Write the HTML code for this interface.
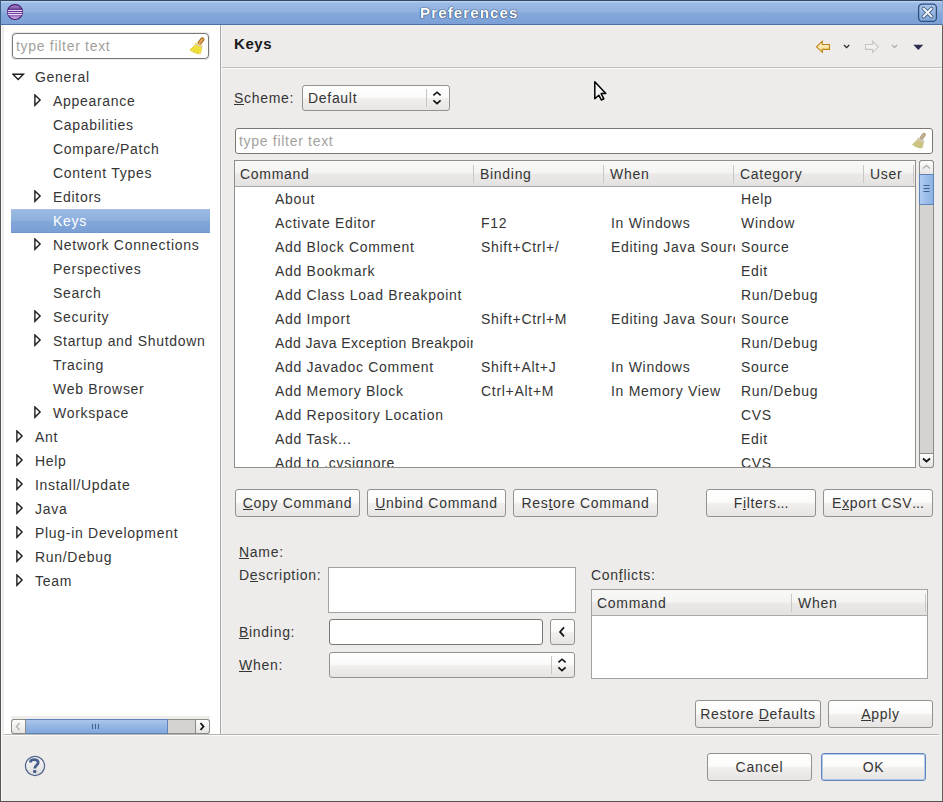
<!DOCTYPE html>
<html><head><meta charset="utf-8"><style>
*{margin:0;padding:0;box-sizing:border-box}
html,body{width:943px;height:802px;overflow:hidden;background:#edeceb}
body{position:relative;font-family:"Liberation Sans",sans-serif;font-size:14px;color:#353535;letter-spacing:0.7px}
.a{position:absolute}
.t{position:absolute;white-space:nowrap;line-height:16px;height:16px}
.u{position:relative}
.u:after{content:"";position:absolute;left:0;right:0.5px;top:14px;height:1px;background:#353535}
.btn{position:absolute;border:1px solid #94928d;border-radius:3px;background:linear-gradient(#fefefe,#fbfbfa 47%,#f0efed 53%,#e6e5e3);text-align:center;line-height:27px;white-space:nowrap}
.hdr{position:absolute;background:linear-gradient(#f8f8f7,#f4f4f3 47%,#eae9e7 53%,#e3e2e0);border-bottom:1px solid #a9a8a4}
.sep{position:absolute;width:1px;background:#cbc9c5}
.clip{position:absolute;overflow:hidden;white-space:nowrap}
</style></head><body>
<div class="a" style="left:0;top:0;width:943px;height:25px;background:linear-gradient(#b6ceef,#b6ceef 1px,#9cbae4 2px,#90b1df 48%,#85a8da 52%,#7ba0d6);border-top:1px solid #34495f;border-bottom:1px solid #4a70a6;border-left:1px solid #3f5d85;border-right:1px solid #8aabdb"></div>
<svg class="a" style="left:6px;top:3px" width="18" height="18" viewBox="0 0 18 18">
<defs><linearGradient id="eg" x1="0" y1="0" x2="0" y2="1"><stop offset="0" stop-color="#7e56aa"/><stop offset="0.15" stop-color="#9a78c0"/><stop offset="0.42" stop-color="#4a1c7c"/><stop offset="0.7" stop-color="#8e62b8"/><stop offset="1" stop-color="#dcc6ee"/></linearGradient></defs>
<circle cx="9" cy="9" r="7.5" fill="url(#eg)" stroke="#46166c" stroke-width="1.1"/>
<rect x="1.8" y="7" width="14.4" height="1.2" fill="#eadcf4"/><rect x="1.6" y="9" width="14.8" height="1.1" fill="#e4d4f0"/><rect x="1.9" y="10.9" width="14.2" height="1.1" fill="#eadcf4"/>
<rect x="1.8" y="8.2" width="14.4" height="0.8" fill="#5a2a8c"/><rect x="1.8" y="10.1" width="14.4" height="0.8" fill="#6a38a0"/>
</svg>
<div class="t" style="left:420px;top:5px;color:#fff;font-weight:bold;font-size:15px;letter-spacing:1.15px;text-shadow:0 0 1px #24446f,0 0 1px #24446f,0 0 1px #24446f">Preferences</div>
<svg class="a" style="left:917px;top:3px" width="22" height="20" viewBox="0 0 22 20">
<defs><linearGradient id="xg" x1="0" y1="0" x2="0" y2="1"><stop offset="0" stop-color="#adc8ec"/><stop offset="1" stop-color="#7ea3d7"/></linearGradient></defs>
<rect x="1.6" y="1.2" width="17.8" height="17.2" rx="3.5" fill="url(#xg)" stroke="#2f4f7e" stroke-width="1.3"/>
<path d="M6.5 5.5 L14.5 13.5 M14.5 5.5 L6.5 13.5" stroke="#34557f" stroke-width="3.8" stroke-linecap="round"/>
<path d="M6.5 5.5 L14.5 13.5 M14.5 5.5 L6.5 13.5" stroke="#f4f6fa" stroke-width="2.1" stroke-linecap="round"/>
</svg>
<div class="a" style="left:1px;top:25px;width:219px;height:709px;background:#fff"></div>
<div class="a" style="left:2px;top:25px;width:2px;height:709px;background:#eeedec"></div>
<div class="a" style="left:1px;top:25px;width:1px;height:776px;background:#fbfbfb"></div>
<div class="a" style="left:220px;top:25px;width:1px;height:710px;background:#a9a7a3"></div>
<div class="a" style="left:221px;top:25px;width:1px;height:709px;background:#f7f7f6"></div>
<div class="a" style="left:4px;top:734px;width:935px;height:1px;background:#b6b4b0"></div>
<div class="a" style="left:4px;top:735px;width:935px;height:1px;background:#fbfbfa"></div>
<div class="a" style="left:0;top:25px;width:1px;height:777px;background:#56544f"></div>
<div class="a" style="left:942px;top:25px;width:1px;height:777px;background:#615f5a"></div>
<div class="a" style="left:0;top:801px;width:943px;height:1px;background:#56544f"></div>
<div class="a" style="left:11px;top:32px;width:199px;height:28px;border-radius:4px;background:#eceae8"></div>
<div class="a" style="left:12px;top:33px;width:197px;height:26px;border:1px solid #7b7873;border-radius:4px;background:#fff"></div>
<div class="t" style="left:16px;top:38px;color:#a3a19d">type filter text</div>
<svg class="a" style="left:184px;top:32px" width="26" height="26" viewBox="0 0 26 26">
<path d="M15.6 11 L18.4 7.4" stroke="#a8681a" stroke-width="4.2" stroke-linecap="round"/>
<path d="M15.6 11 L18.4 7.4" stroke="#dca25a" stroke-width="2.4" stroke-linecap="round"/>
<path d="M11.6 10.2 L12.6 11.2 L18.2 13.6 L19 14.6 L17.8 15.6 L11 12.8 Z" fill="#f3e43e"/>
<path d="M11.4 12.3 L18.2 14.8" stroke="#dccfe6" stroke-width="1.4"/>
<path d="M10.9 13 L17.9 15.6 C17.5 17.6 17.1 19.8 16.5 21.6 C14 22 10.2 21.2 5.8 17.8 C7.6 16.2 9.4 14.6 10.9 13 Z" fill="#f3e43e" stroke="#d2b818" stroke-width="0.5"/>
<path d="M10 15 L6.8 18.4 M12.6 15.6 L9.6 20.6 M15 16.6 L13.2 21.4" stroke="#d2b818" stroke-width="0.7" opacity="0.7"/>
</svg>
<div class="a" style="left:11px;top:209px;width:199px;height:24px;background:linear-gradient(#9bb9e2,#8eb0de 47%,#82a6d8 53%,#7aa0d5);border-top:1px solid #a3bfe6;border-bottom:1px solid #6f96cd"></div>
<svg class="a" style="left:12px;top:73px" width="14" height="8" viewBox="0 0 14 8"><path d="M0.9 1.2 L11.4 1.2 L6.15 6.5 Z" fill="none" stroke="#1c1c1c" stroke-width="1.4"/></svg>
<div class="t" style="left:35px;top:69px;">General</div>
<svg class="a" style="left:34px;top:94px" width="8" height="13" viewBox="0 0 8 13"><path d="M0.9 0.9 L6.1 6 L0.9 11.3 Z" fill="none" stroke="#1c1c1c" stroke-width="1.4" stroke-linejoin="miter"/></svg>
<div class="t" style="left:53px;top:93px;">Appearance</div>
<div class="t" style="left:53px;top:117px;">Capabilities</div>
<div class="t" style="left:53px;top:141px;">Compare/Patch</div>
<div class="t" style="left:53px;top:165px;">Content Types</div>
<svg class="a" style="left:34px;top:190px" width="8" height="13" viewBox="0 0 8 13"><path d="M0.9 0.9 L6.1 6 L0.9 11.3 Z" fill="none" stroke="#1c1c1c" stroke-width="1.4" stroke-linejoin="miter"/></svg>
<div class="t" style="left:53px;top:189px;">Editors</div>
<div class="t" style="left:53px;top:213px;color:#fff">Keys</div>
<svg class="a" style="left:34px;top:238px" width="8" height="13" viewBox="0 0 8 13"><path d="M0.9 0.9 L6.1 6 L0.9 11.3 Z" fill="none" stroke="#1c1c1c" stroke-width="1.4" stroke-linejoin="miter"/></svg>
<div class="t" style="left:53px;top:237px;">Network Connections</div>
<div class="t" style="left:53px;top:261px;">Perspectives</div>
<div class="t" style="left:53px;top:285px;">Search</div>
<svg class="a" style="left:34px;top:310px" width="8" height="13" viewBox="0 0 8 13"><path d="M0.9 0.9 L6.1 6 L0.9 11.3 Z" fill="none" stroke="#1c1c1c" stroke-width="1.4" stroke-linejoin="miter"/></svg>
<div class="t" style="left:53px;top:309px;">Security</div>
<svg class="a" style="left:34px;top:334px" width="8" height="13" viewBox="0 0 8 13"><path d="M0.9 0.9 L6.1 6 L0.9 11.3 Z" fill="none" stroke="#1c1c1c" stroke-width="1.4" stroke-linejoin="miter"/></svg>
<div class="t" style="left:53px;top:333px;">Startup and Shutdown</div>
<div class="t" style="left:53px;top:357px;">Tracing</div>
<div class="t" style="left:53px;top:381px;">Web Browser</div>
<svg class="a" style="left:34px;top:406px" width="8" height="13" viewBox="0 0 8 13"><path d="M0.9 0.9 L6.1 6 L0.9 11.3 Z" fill="none" stroke="#1c1c1c" stroke-width="1.4" stroke-linejoin="miter"/></svg>
<div class="t" style="left:53px;top:405px;">Workspace</div>
<svg class="a" style="left:16px;top:430px" width="8" height="13" viewBox="0 0 8 13"><path d="M0.9 0.9 L6.1 6 L0.9 11.3 Z" fill="none" stroke="#1c1c1c" stroke-width="1.4" stroke-linejoin="miter"/></svg>
<div class="t" style="left:35px;top:429px;">Ant</div>
<svg class="a" style="left:16px;top:454px" width="8" height="13" viewBox="0 0 8 13"><path d="M0.9 0.9 L6.1 6 L0.9 11.3 Z" fill="none" stroke="#1c1c1c" stroke-width="1.4" stroke-linejoin="miter"/></svg>
<div class="t" style="left:35px;top:453px;">Help</div>
<svg class="a" style="left:16px;top:478px" width="8" height="13" viewBox="0 0 8 13"><path d="M0.9 0.9 L6.1 6 L0.9 11.3 Z" fill="none" stroke="#1c1c1c" stroke-width="1.4" stroke-linejoin="miter"/></svg>
<div class="t" style="left:35px;top:477px;">Install/Update</div>
<svg class="a" style="left:16px;top:502px" width="8" height="13" viewBox="0 0 8 13"><path d="M0.9 0.9 L6.1 6 L0.9 11.3 Z" fill="none" stroke="#1c1c1c" stroke-width="1.4" stroke-linejoin="miter"/></svg>
<div class="t" style="left:35px;top:501px;">Java</div>
<svg class="a" style="left:16px;top:526px" width="8" height="13" viewBox="0 0 8 13"><path d="M0.9 0.9 L6.1 6 L0.9 11.3 Z" fill="none" stroke="#1c1c1c" stroke-width="1.4" stroke-linejoin="miter"/></svg>
<div class="t" style="left:35px;top:525px;">Plug-in Development</div>
<svg class="a" style="left:16px;top:550px" width="8" height="13" viewBox="0 0 8 13"><path d="M0.9 0.9 L6.1 6 L0.9 11.3 Z" fill="none" stroke="#1c1c1c" stroke-width="1.4" stroke-linejoin="miter"/></svg>
<div class="t" style="left:35px;top:549px;">Run/Debug</div>
<svg class="a" style="left:16px;top:574px" width="8" height="13" viewBox="0 0 8 13"><path d="M0.9 0.9 L6.1 6 L0.9 11.3 Z" fill="none" stroke="#1c1c1c" stroke-width="1.4" stroke-linejoin="miter"/></svg>
<div class="t" style="left:35px;top:573px;">Team</div>
<div class="a" style="left:11px;top:716px;width:199px;height:18px;background:#eeedec"></div>
<div class="a" style="left:11px;top:719px;width:199px;height:15px;background:#d4d3d0;border:1px solid #8c8a85;border-radius:3px"></div>
<div class="a" style="left:25px;top:719px;width:143px;height:15px;background:linear-gradient(#aac6ec,#93b5e3 50%,#82a8da);border:1px solid #5e84b9"></div>
<svg class="a" style="left:91px;top:722px" width="10" height="9"><path d="M1.5 1.8V7M4.5 1.8V7M7.5 1.8V7" stroke="#3f5f8c" stroke-width="1"/></svg>
<div class="a" style="left:11px;top:719px;width:15px;height:15px;background:linear-gradient(#fdfdfd,#e6e5e3);border:1px solid #8c8a85;border-radius:3px 0 0 3px"></div>
<svg class="a" style="left:14px;top:722px" width="8" height="9"><path d="M5.5 1 L2.5 4.5 L5.5 8" fill="none" stroke="#b4b2ae" stroke-width="1.4"/></svg>
<div class="a" style="left:195px;top:719px;width:15px;height:15px;background:linear-gradient(#fdfdfd,#e6e5e3);border:1px solid #8c8a85;border-radius:0 3px 3px 0"></div>
<svg class="a" style="left:198px;top:722px" width="8" height="9"><path d="M2.5 1 L5.5 4.5 L2.5 8" fill="none" stroke="#111" stroke-width="1.8"/></svg>
<div class="t" style="left:234px;top:36px;font-weight:bold;font-size:15px;letter-spacing:0.6px;color:#1a1a1a">Keys</div>
<div class="a" style="left:222px;top:67px;width:720px;height:1px;background:#c1bfbb"></div>
<div class="a" style="left:222px;top:68px;width:720px;height:1px;background:#fbfbfa"></div>
<svg class="a" style="left:815px;top:40px" width="16" height="14" viewBox="0 0 16 14">
<defs><linearGradient id="ag" x1="0" y1="0" x2="0" y2="1"><stop offset="0" stop-color="#fff8e0"/><stop offset="1" stop-color="#f6d57a"/></linearGradient></defs><path d="M1.4 6.8 L7.3 1.3 L7.3 4.5 L14.5 4.5 L14.5 9.4 L7.3 9.4 L7.3 12.3 Z" fill="url(#ag)" stroke="#c0821a" stroke-width="1.1" stroke-linejoin="miter"/>
</svg>
<svg class="a" style="left:843px;top:44px" width="8" height="5"><path d="M1 1 L3.6 3.6 L6.2 1" fill="none" stroke="#2a2a2a" stroke-width="1.3"/></svg>
<svg class="a" style="left:864px;top:40px" width="16" height="14" viewBox="0 0 16 14">
<path d="M14.5 6.8 L8.6 1.3 L8.6 4.5 L1.5 4.5 L1.5 9.4 L8.6 9.4 L8.6 12.3 Z" fill="#f1f1f0" stroke="#c6c5c2" stroke-width="1.1" stroke-linejoin="miter"/>
</svg>
<svg class="a" style="left:891px;top:44px" width="7" height="5"><path d="M1 1 L3.5 3.6 L6 1" fill="none" stroke="#b0aeaa" stroke-width="1.3"/></svg>
<svg class="a" style="left:913px;top:44px" width="11" height="7"><path d="M0.3 0.8 L10.3 0.8 L5.3 6 Z" fill="#2c2c4e"/></svg>
<div class="t" style="left:234px;top:90px;"><span class="u">S</span>cheme:</div>
<div class="btn" style="left:302px;top:85px;width:148px;height:26px;text-align:left"></div>
<div class="t" style="left:308px;top:90px;">Default</div>
<div class="a" style="left:426px;top:89px;width:1px;height:18px;background:#c8c6c2"></div>
<svg class="a" style="left:432px;top:89px" width="10" height="18"><path d="M1.4 6.4 L5 3.2 L8.6 6.4 M1.4 11.4 L5 14.6 L8.6 11.4" fill="none" stroke="#111" stroke-width="1.6"/></svg>
<div class="a" style="left:235px;top:128px;width:698px;height:26px;border:1px solid #7b7873;border-radius:3px;background:#fff"></div>
<div class="t" style="left:239px;top:133px;color:#a3a19d">type filter text</div>
<div class="a" style="left:0;top:0;opacity:0.6"><svg class="a" style="left:907px;top:128px" width="24" height="24" viewBox="0 0 26 26">
<path d="M15.6 11 L18.4 7.4" stroke="#7a5a28" stroke-width="4.2" stroke-linecap="round"/>
<path d="M15.6 11 L18.4 7.4" stroke="#a08048" stroke-width="2.4" stroke-linecap="round"/>
<path d="M11.6 10.2 L12.6 11.2 L18.2 13.6 L19 14.6 L17.8 15.6 L11 12.8 Z" fill="#b0a030"/>
<path d="M11.4 12.3 L18.2 14.8" stroke="#b8a8c8" stroke-width="1.4"/>
<path d="M10.9 13 L17.9 15.6 C17.5 17.6 17.1 19.8 16.5 21.6 C14 22 10.2 21.2 5.8 17.8 C7.6 16.2 9.4 14.6 10.9 13 Z" fill="#b0a030" stroke="#988a20" stroke-width="0.5"/>
<path d="M10 15 L6.8 18.4 M12.6 15.6 L9.6 20.6 M15 16.6 L13.2 21.4" stroke="#988a20" stroke-width="0.7" opacity="0.7"/>
</svg></div>
<div class="a" style="left:234px;top:160px;width:682px;height:308px;border:1px solid #908e89;background:#fff"></div>
<div class="hdr" style="left:235px;top:161px;width:680px;height:26px"></div>
<div class="sep" style="left:473px;top:165px;height:18px"></div>
<div class="sep" style="left:603px;top:165px;height:18px"></div>
<div class="sep" style="left:733px;top:165px;height:18px"></div>
<div class="sep" style="left:863px;top:165px;height:18px"></div>
<div class="sep" style="left:913px;top:165px;height:18px"></div>
<div class="t" style="left:240px;top:166px;">Command</div>
<div class="t" style="left:480px;top:166px;">Binding</div>
<div class="t" style="left:610px;top:166px;">When</div>
<div class="t" style="left:740px;top:166px;">Category</div>
<div class="t" style="left:870px;top:166px;">User</div>
<div class="clip" style="left:0;top:187px;width:915px;height:280px"><div class="clip" style="left:275px;top:4px;width:198px;height:16px;line-height:16px;">About</div><div class="t" style="left:741px;top:4px">Help</div><div class="clip" style="left:275px;top:28px;width:198px;height:16px;line-height:16px;">Activate Editor</div><div class="t" style="left:481px;top:28px">F12</div><div class="clip" style="left:611px;top:28px;width:124px;height:16px;line-height:16px">In Windows</div><div class="t" style="left:741px;top:28px">Window</div><div class="clip" style="left:275px;top:52px;width:198px;height:16px;line-height:16px;">Add Block Comment</div><div class="t" style="left:481px;top:52px">Shift+Ctrl+/</div><div class="clip" style="left:611px;top:52px;width:124px;height:16px;line-height:16px">Editing Java Source</div><div class="t" style="left:741px;top:52px">Source</div><div class="clip" style="left:275px;top:76px;width:198px;height:16px;line-height:16px;">Add Bookmark</div><div class="t" style="left:741px;top:76px">Edit</div><div class="clip" style="left:275px;top:100px;width:198px;height:16px;line-height:16px;">Add Class Load Breakpoint</div><div class="t" style="left:741px;top:100px">Run/Debug</div><div class="clip" style="left:275px;top:124px;width:198px;height:16px;line-height:16px;">Add Import</div><div class="t" style="left:481px;top:124px">Shift+Ctrl+M</div><div class="clip" style="left:611px;top:124px;width:124px;height:16px;line-height:16px">Editing Java Source</div><div class="t" style="left:741px;top:124px">Source</div><div class="clip" style="left:275px;top:148px;width:198px;height:16px;line-height:16px;letter-spacing:0.45px">Add Java Exception Breakpoint</div><div class="t" style="left:741px;top:148px">Run/Debug</div><div class="clip" style="left:275px;top:172px;width:198px;height:16px;line-height:16px;">Add Javadoc Comment</div><div class="t" style="left:481px;top:172px">Shift+Alt+J</div><div class="clip" style="left:611px;top:172px;width:124px;height:16px;line-height:16px">In Windows</div><div class="t" style="left:741px;top:172px">Source</div><div class="clip" style="left:275px;top:196px;width:198px;height:16px;line-height:16px;">Add Memory Block</div><div class="t" style="left:481px;top:196px">Ctrl+Alt+M</div><div class="clip" style="left:611px;top:196px;width:124px;height:16px;line-height:16px">In Memory View</div><div class="t" style="left:741px;top:196px">Run/Debug</div><div class="clip" style="left:275px;top:220px;width:198px;height:16px;line-height:16px;">Add Repository Location</div><div class="t" style="left:741px;top:220px">CVS</div><div class="clip" style="left:275px;top:244px;width:198px;height:16px;line-height:16px;">Add Task...</div><div class="t" style="left:741px;top:244px">Edit</div><div class="clip" style="left:275px;top:268px;width:198px;height:16px;line-height:16px;">Add to .cvsignore</div><div class="t" style="left:741px;top:268px">CVS</div></div>
<div class="a" style="left:919px;top:160px;width:15px;height:308px;background:#d4d3d0;border:1px solid #8c8a85;border-radius:3px"></div>
<div class="a" style="left:919px;top:160px;width:15px;height:15px;background:linear-gradient(#fdfdfd,#e6e5e3);border:1px solid #8c8a85;border-radius:3px 3px 0 0"></div>
<svg class="a" style="left:922px;top:163px" width="9" height="8"><path d="M1 5.5 L4.5 2.5 L8 5.5" fill="none" stroke="#b4b2ae" stroke-width="1.4"/></svg>
<div class="a" style="left:919px;top:174px;width:15px;height:31px;background:linear-gradient(90deg,#afcbef,#9dbdea 50%,#8cb1e2);border:1px solid #5e84b9"></div>
<svg class="a" style="left:922px;top:184px" width="9" height="10"><path d="M1.5 1.5H7.5M1.5 4.5H7.5M1.5 7.5H7.5" stroke="#3f5f8c" stroke-width="1"/></svg>
<div class="a" style="left:919px;top:453px;width:15px;height:15px;background:linear-gradient(#fdfdfd,#e6e5e3);border:1px solid #8c8a85;border-radius:0 0 3px 3px"></div>
<svg class="a" style="left:922px;top:456px" width="9" height="8"><path d="M1 2.5 L4.5 5.5 L8 2.5" fill="none" stroke="#111" stroke-width="1.8"/></svg>
<div class="btn" style="left:235px;top:489px;width:125px;height:28px;"><span class="u">C</span>opy Command</div>
<div class="btn" style="left:367px;top:489px;width:139px;height:28px;"><span class="u">U</span>nbind Command</div>
<div class="btn" style="left:513px;top:489px;width:145px;height:28px;">Res<span class="u">t</span>ore Command</div>
<div class="btn" style="left:706px;top:489px;width:110px;height:28px;">F<span class="u">i</span>lters<span style="letter-spacing:0">...</span></div>
<div class="btn" style="left:823px;top:489px;width:110px;height:28px;">E<span class="u">x</span>port CSV<span style="letter-spacing:0">...</span></div>
<div class="t" style="left:239px;top:544px;"><span class="u">N</span>ame:</div>
<div class="t" style="left:239px;top:567px;">D<span class="u">e</span>scription:</div>
<div class="a" style="left:328px;top:567px;width:248px;height:46px;border:1px solid #a4a29e;background:#fff"></div>
<div class="t" style="left:239px;top:624px;"><span class="u">B</span>inding:</div>
<div class="a" style="left:329px;top:619px;width:214px;height:26px;border:1px solid #7b7873;border-radius:3px;background:#fff"></div>
<div class="btn" style="left:550px;top:619px;width:25px;height:26px"></div>
<svg class="a" style="left:557px;top:626px" width="10" height="12"><path d="M7 1.4 L3 5.9 L7 10.4" fill="none" stroke="#111" stroke-width="1.7"/></svg>
<div class="t" style="left:239px;top:657px;"><span class="u">W</span>hen:</div>
<div class="btn" style="left:329px;top:652px;width:246px;height:26px"></div>
<div class="a" style="left:551px;top:656px;width:1px;height:18px;background:#c8c6c2"></div>
<svg class="a" style="left:557px;top:656px" width="10" height="18"><path d="M1.4 6.4 L5 3.2 L8.6 6.4 M1.4 11.4 L5 14.6 L8.6 11.4" fill="none" stroke="#111" stroke-width="1.6"/></svg>
<div class="t" style="left:591px;top:567px;">Con<span class="u">f</span>licts:</div>
<div class="a" style="left:591px;top:589px;width:337px;height:90px;border:1px solid #a4a29e;background:#fff"></div>
<div class="hdr" style="left:592px;top:590px;width:335px;height:26px"></div>
<div class="sep" style="left:791px;top:594px;height:18px"></div>
<div class="sep" style="left:925px;top:594px;height:18px"></div>
<div class="t" style="left:597px;top:595px;">Command</div>
<div class="t" style="left:798px;top:595px;">When</div>
<div class="btn" style="left:695px;top:700px;width:126px;height:28px;">Restore <span class="u">D</span>efaults</div>
<div class="btn" style="left:828px;top:700px;width:105px;height:28px;"><span class="u">A</span>pply</div>
<svg class="a" style="left:24px;top:755px" width="22" height="22" viewBox="0 0 22 22">
<defs><linearGradient id="hg" x1="0" y1="0" x2="0" y2="1"><stop offset="0" stop-color="#fafafa"/><stop offset="1" stop-color="#dcdcdc"/></linearGradient></defs>
<circle cx="11" cy="11" r="9.6" fill="url(#hg)" stroke="#4d648c" stroke-width="1.2"/>
<g transform="translate(-1.2,0)"><path d="M7.6 7.4 C7.6 3.9 15.4 3.6 15.4 7.4 C15.4 10.2 11.9 10.4 11.9 13.6" fill="none" stroke="#49618a" stroke-width="2.8"/>
<rect x="10.2" y="15" width="3.4" height="3" rx="1" fill="#49618a"/></g>
</svg>
<div class="btn" style="left:707px;top:753px;width:105px;height:28px;">Cancel</div>
<div class="btn" style="left:821px;top:753px;width:105px;height:28px;border:1px solid #5f86be;box-shadow:inset 0 0 0 1px #b3c8e6">OK</div>
<svg class="a" style="left:593px;top:80px" width="16" height="22" viewBox="0 0 16 22">
<defs><linearGradient id="cg" x1="0" y1="0" x2="1" y2="1"><stop offset="0" stop-color="#fff"/><stop offset="1" stop-color="#e6e6e6"/></linearGradient></defs>
<path d="M1.8 1.8 L1.8 18.8 L5.8 15.2 L8.3 20 L10.9 18.8 L8.1 13.6 L12.8 13.4 Z" fill="url(#cg)" stroke="#000" stroke-width="1.5" stroke-linejoin="round"/>
</svg>
</body></html>
